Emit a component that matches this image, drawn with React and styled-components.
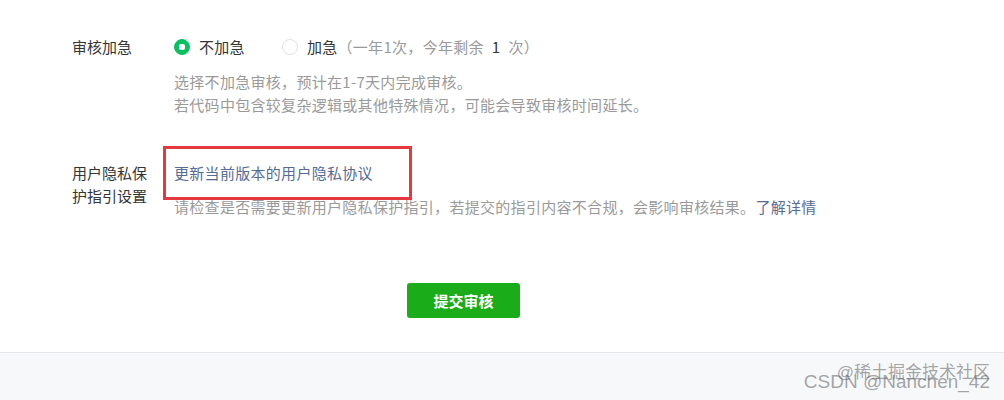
import styled, { createGlobalStyle } from "styled-components";

const Global = createGlobalStyle`
  html, body { margin: 0; padding: 0; background: #fff; }
  body { font-family: "Noto Sans CJK SC", "Liberation Sans", sans-serif; }
`;

const Page = styled.div`
  width: 1004px;
  height: 400px;
  display: flex;
  flex-direction: column;
  overflow: hidden;
`;

const Main = styled.div`
  padding: 35px 0 0 72px;
  display: flex;
  flex-direction: column;
  height: 353px;
  flex-shrink: 0;
  box-sizing: border-box;
  border-bottom: 1px solid #e4e6eb;
`;

const Row = styled.div`
  display: flex;
  margin-bottom: ${(p) => p.$mb || 0}px;
`;

const Label = styled.div`
  width: 102px;
  flex-shrink: 0;
  font-size: 15px;
  line-height: 23px;
  color: #353535;
  padding-right: 20px;
  box-sizing: border-box;
`;

const Content = styled.div`
  display: flex;
  flex-direction: column;
  font-size: 15px;
  line-height: 23px;
  letter-spacing: 0.3px;
`;

const Radios = styled.div`
  display: flex;
  align-items: center;
  gap: 37px;
`;

const RadioItem = styled.label`
  display: flex;
  align-items: center;
  gap: 9px;
  color: #353535;
`;

const Dot = styled.span`
  width: 16px;
  height: 16px;
  border-radius: 50%;
  box-sizing: border-box;
  display: flex;
  align-items: center;
  justify-content: center;
  background: ${(p) => (p.$on ? "#07c160" : "#fff")};
  border: 1px solid ${(p) => (p.$on ? "#07c160" : "#e2e2e2")};
  &::after {
    content: "";
    display: ${(p) => (p.$on ? "block" : "none")};
    width: 6px;
    height: 6px;
    border-radius: 2px;
    background: #fff;
  }
`;

const Muted = styled.span`
  color: #9a9a9a;
`;

const Dark = styled.span`
  color: #353535;
  margin: 0 8px;
`;

const Help = styled.div`
  color: #9a9a9a;
  margin-top: ${(p) => p.$mt || 0}px;
`;

const LinkWrap = styled.div`
  position: relative;
  align-self: flex-start;
`;

const Link = styled.a`
  color: #576b95;
  text-decoration: none;
  cursor: pointer;
`;

const Mark = styled.div`
  position: absolute;
  left: -11px;
  top: -15px;
  width: 249px;
  height: 54px;
  border: 3px solid #e5393f;
  box-sizing: border-box;
  pointer-events: none;
`;

const Actions = styled.div`
  display: flex;
  padding-left: 335px;
  margin-top: 65px;
`;

const Submit = styled.button`
  width: 113px;
  height: 35px;
  border: none;
  border-radius: 3px;
  background: #1aad19;
  color: #fff;
  font-family: inherit;
  font-size: 15px;
  font-weight: 700;
  cursor: pointer;
`;

const Footer = styled.div`
  flex: 1;
  background: #f7f8fa;
  position: relative;
`;

const Water = styled.div`
  position: absolute;
  right: ${(p) => p.$r}px;
  top: ${(p) => p.$t}px;
  font-size: ${(p) => p.$s}px;
  line-height: 1;
  color: rgba(90, 90, 90, 0.55);
  white-space: nowrap;
  font-family: "Liberation Sans", "Noto Sans CJK SC", sans-serif;
`;

export default function App() {
  return (
    <Page>
      <Global />
      <Main>
        <Row $mb={45}>
          <Label>审核加急</Label>
          <Content>
            <Radios>
              <RadioItem>
                <Dot $on />
                不加急
              </RadioItem>
              <RadioItem>
                <Dot />
                <span>
                  加急
                  <Muted>
                    （一年1次，今年剩余<Dark>1</Dark>次）
                  </Muted>
                </span>
              </RadioItem>
            </Radios>
            <Help $mt={12}>
              选择不加急审核，预计在1-7天内完成审核。
              <br />
              若代码中包含较复杂逻辑或其他特殊情况，可能会导致审核时间延长。
            </Help>
          </Content>
        </Row>
        <Row>
          <Label>用户隐私保护指引设置</Label>
          <Content>
            <LinkWrap>
              <Link>更新当前版本的用户隐私协议</Link>
              <Mark />
            </LinkWrap>
            <Help $mt={11}>
              请检查是否需要更新用户隐私保护指引，若提交的指引内容不合规，会影响审核结果。
              <Link>了解详情</Link>
            </Help>
          </Content>
        </Row>
        <Actions>
          <Submit>提交审核</Submit>
        </Actions>
      </Main>
      <Footer>
        <Water $r={14} $t={19} $s={19}>
          CSDN @Nanchen_42
        </Water>
        <Water $r={14} $t={11} $s={17}>
          @稀土掘金技术社区
        </Water>
      </Footer>
    </Page>
  );
}
